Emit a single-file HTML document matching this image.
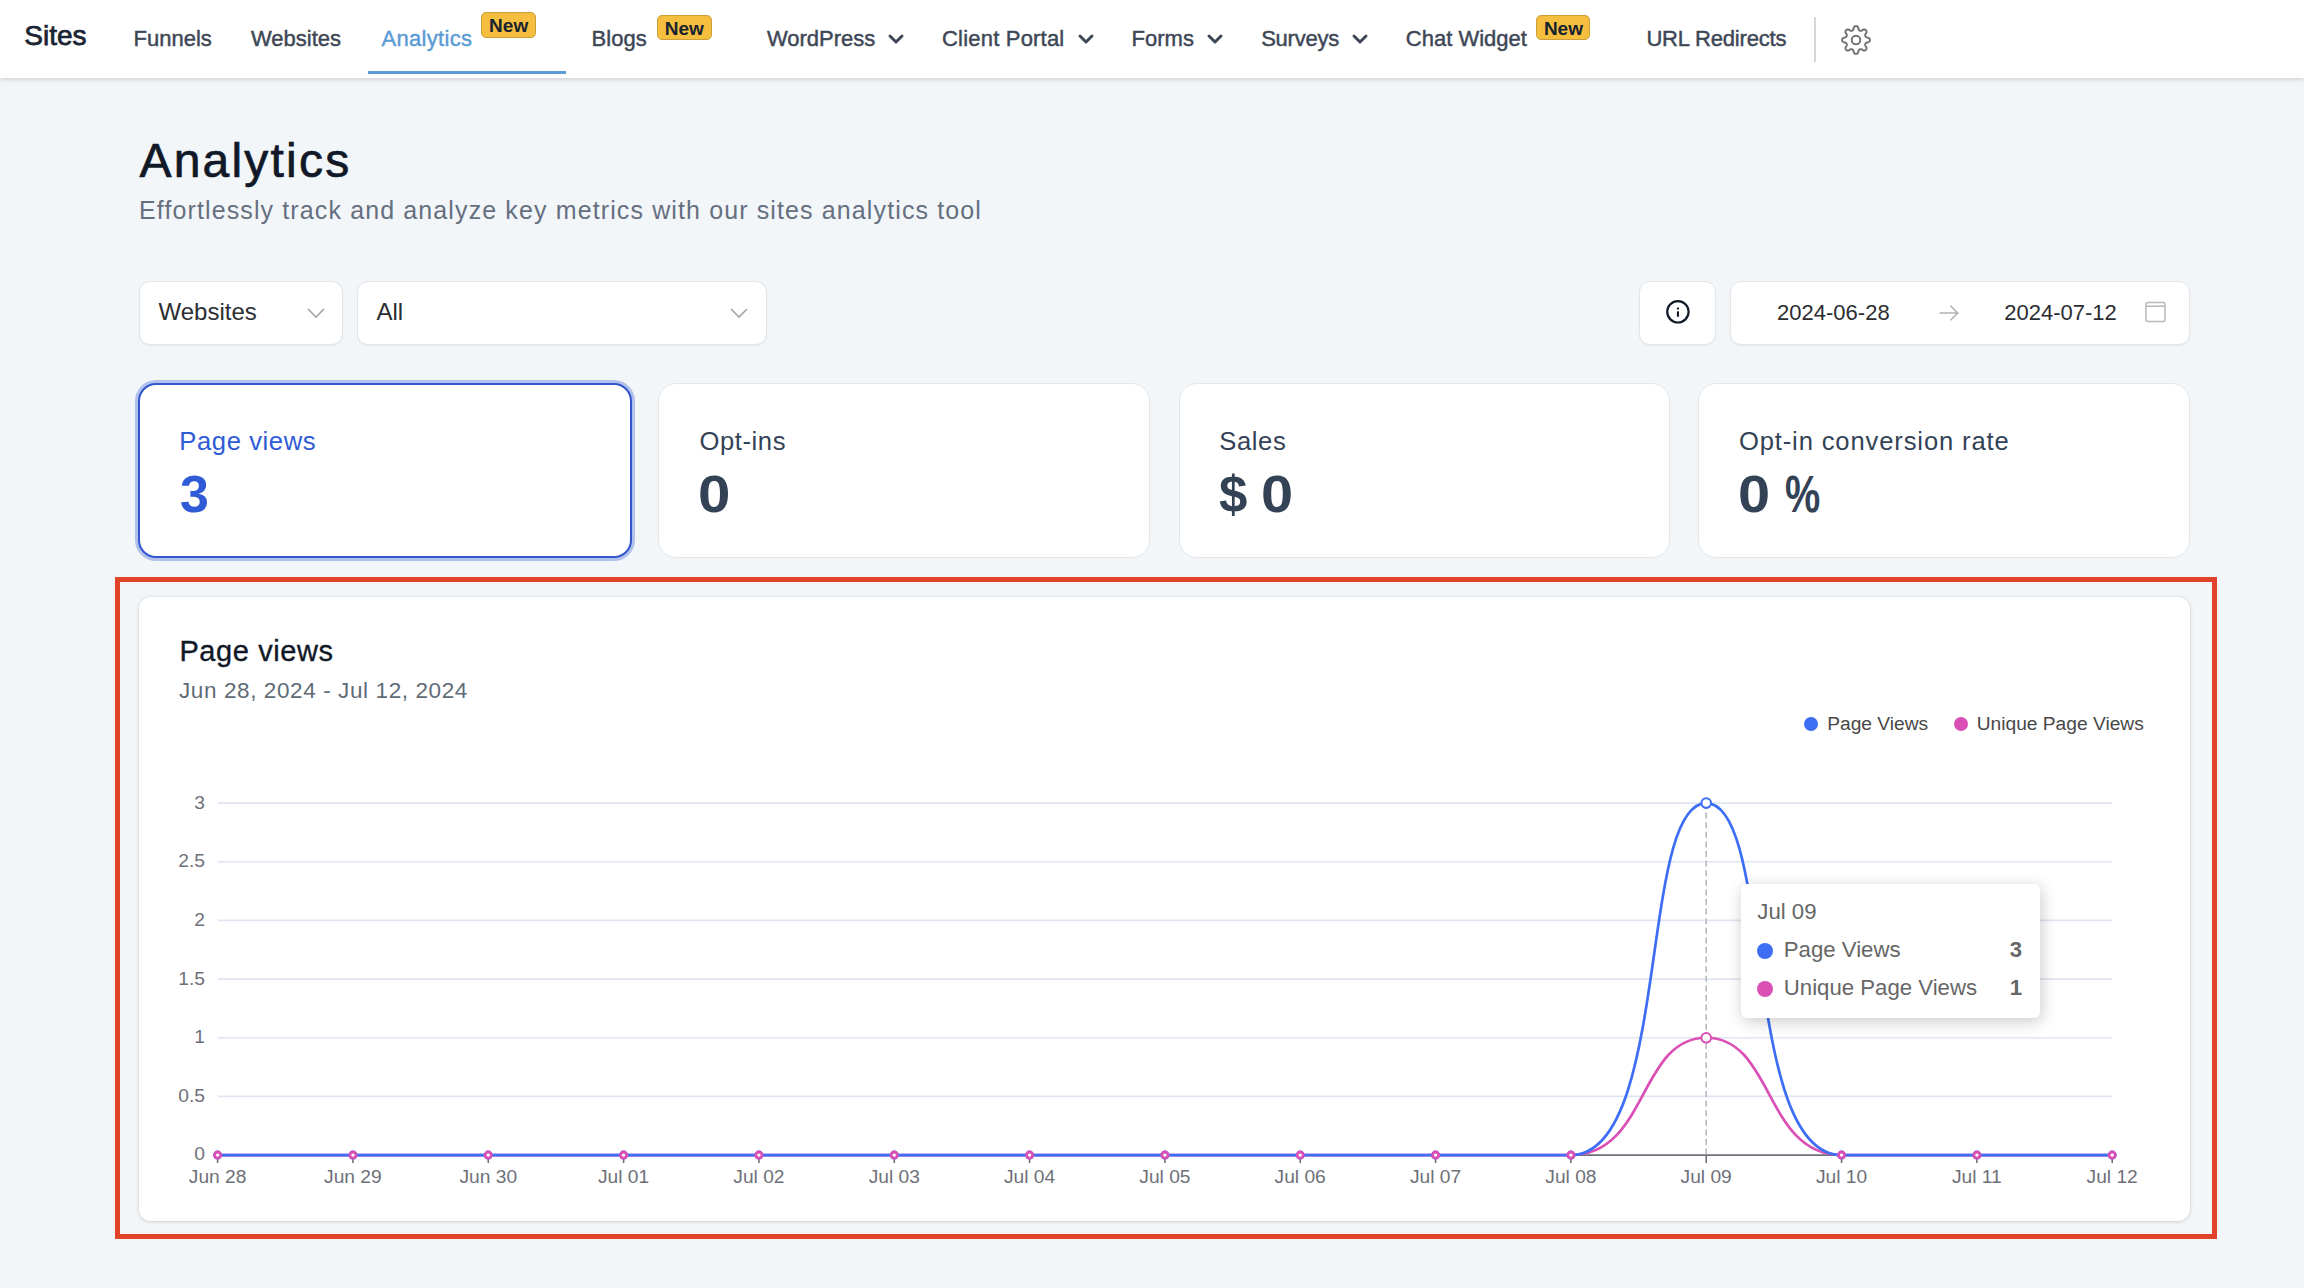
<!DOCTYPE html>
<html><head><meta charset="utf-8">
<style>
html,body{margin:0;padding:0;}
body{width:2304px;height:1288px;overflow:hidden;position:relative;background:#f2f6f9;font-family:"Liberation Sans",sans-serif;}
.t{position:absolute;white-space:nowrap;line-height:1;}
.abs{position:absolute;}
#nav{position:absolute;left:0;top:0;width:2304px;height:78px;background:#fff;box-shadow:0 1.5px 4px rgba(0,0,0,0.13);}
.ni{font-size:22px;color:#3e4756;top:27.7px;-webkit-text-stroke:0.45px #3e4756;}
.badge{position:absolute;background:#f5be3f;border:1px solid #c9a03a;border-radius:5px;box-sizing:border-box;}
.badge span{position:absolute;left:0;right:0;text-align:center;font-weight:bold;font-size:19px;line-height:1;color:#17232e;}
.chev{position:absolute;}
.box{position:absolute;background:#fff;border:1px solid #e2e5ea;box-sizing:border-box;box-shadow:0 1px 2px rgba(16,24,40,0.05);}
.card{position:absolute;top:383px;height:175px;background:#fff;border:1px solid #e3e6eb;border-radius:18px;box-sizing:border-box;}
.lbl{font-size:25.6px;color:#344256;top:429px;letter-spacing:0.6px;}
.val{font-size:52px;font-weight:bold;color:#344256;top:468.4px;transform-origin:0 0;}
.ax{font-size:19.2px;color:#6e7079;}
</style></head>
<body>
<div id="nav">
  <div class="t" style="left:24.3px;top:22.3px;font-size:28px;color:#1b2432;-webkit-text-stroke:0.75px #1b2432;">Sites</div>
  <div class="t ni" style="left:133.6px;">Funnels</div>
  <div class="t ni" style="left:251px;">Websites</div>
  <div class="t ni" style="left:381.5px;color:#5b9bd5;-webkit-text-stroke:0.45px #5b9bd5;letter-spacing:0.3px;">Analytics</div>
  <div class="badge" style="left:481.3px;top:12.3px;width:54.7px;height:25.5px;"><span style="top:3.2px;">New</span></div>
  <div class="abs" style="left:368px;top:71px;width:198px;height:3px;background:#5b9bd5;"></div>
  <div class="t ni" style="left:591.6px;">Blogs</div>
  <div class="badge" style="left:656.7px;top:14.5px;width:55.1px;height:25px;"><span style="top:3px;">New</span></div>
  <div class="t ni" style="left:766.9px;">WordPress</div>
  <svg class="chev" style="left:886px;top:31px;" width="20" height="16" viewBox="0 0 20 16"><path d="M4 5 L10 11 L16 5" fill="none" stroke="#3e4756" stroke-width="3" stroke-linecap="round" stroke-linejoin="round"/></svg>
  <div class="t ni" style="left:942px;letter-spacing:0.2px;">Client Portal</div>
  <svg class="chev" style="left:1076px;top:31px;" width="20" height="16" viewBox="0 0 20 16"><path d="M4 5 L10 11 L16 5" fill="none" stroke="#3e4756" stroke-width="3" stroke-linecap="round" stroke-linejoin="round"/></svg>
  <div class="t ni" style="left:1131.6px;">Forms</div>
  <svg class="chev" style="left:1205px;top:31px;" width="20" height="16" viewBox="0 0 20 16"><path d="M4 5 L10 11 L16 5" fill="none" stroke="#3e4756" stroke-width="3" stroke-linecap="round" stroke-linejoin="round"/></svg>
  <div class="t ni" style="left:1261.2px;letter-spacing:-0.25px;">Surveys</div>
  <svg class="chev" style="left:1350px;top:31px;" width="20" height="16" viewBox="0 0 20 16"><path d="M4 5 L10 11 L16 5" fill="none" stroke="#3e4756" stroke-width="3" stroke-linecap="round" stroke-linejoin="round"/></svg>
  <div class="t ni" style="left:1405.8px;">Chat Widget</div>
  <div class="badge" style="left:1536.4px;top:14.5px;width:54.1px;height:25px;"><span style="top:3px;">New</span></div>
  <div class="t ni" style="left:1646.4px;letter-spacing:-0.18px;">URL Redirects</div>
  <div class="abs" style="left:1813.5px;top:17px;width:2.2px;height:45px;background:#d3d6db;"></div>
  <svg class="abs" style="left:1840.4px;top:23.5px;" width="32" height="32" viewBox="0 0 32 32"><path fill="none" stroke="#6f6f6f" stroke-width="1.9" stroke-linejoin="round" d="M16.00 2.05L16.27 2.07L16.55 2.12L16.81 2.20L17.08 2.33L17.33 2.48L17.58 2.68L17.81 2.91L18.03 3.20L18.22 3.56L18.34 4.23L18.43 4.90L18.58 5.27L18.72 5.56L18.87 5.81L19.02 6.03L19.18 6.22L19.34 6.38L19.50 6.52L19.67 6.63L19.85 6.72L20.03 6.78L20.23 6.82L20.44 6.84L20.67 6.84L20.91 6.81L21.17 6.77L21.45 6.69L21.77 6.59L22.12 6.43L22.67 6.02L23.23 5.63L23.62 5.51L23.98 5.46L24.31 5.46L24.62 5.50L24.91 5.57L25.18 5.67L25.43 5.80L25.66 5.95L25.86 6.14L26.05 6.34L26.20 6.57L26.33 6.82L26.43 7.09L26.50 7.38L26.54 7.69L26.54 8.02L26.49 8.38L26.37 8.77L25.98 9.33L25.57 9.88L25.41 10.23L25.31 10.55L25.23 10.83L25.19 11.09L25.16 11.33L25.16 11.56L25.18 11.77L25.22 11.97L25.28 12.15L25.37 12.33L25.48 12.50L25.62 12.66L25.78 12.82L25.97 12.98L26.19 13.13L26.44 13.28L26.73 13.42L27.10 13.57L27.77 13.66L28.44 13.78L28.80 13.97L29.09 14.19L29.32 14.42L29.52 14.67L29.67 14.92L29.80 15.19L29.88 15.45L29.93 15.73L29.95 16.00L29.93 16.27L29.88 16.55L29.80 16.81L29.67 17.08L29.52 17.33L29.32 17.58L29.09 17.81L28.80 18.03L28.44 18.22L27.77 18.34L27.10 18.43L26.73 18.58L26.44 18.72L26.19 18.87L25.97 19.02L25.78 19.18L25.62 19.34L25.48 19.50L25.37 19.67L25.28 19.85L25.22 20.03L25.18 20.23L25.16 20.44L25.16 20.67L25.19 20.91L25.23 21.17L25.31 21.45L25.41 21.77L25.57 22.12L25.98 22.67L26.37 23.23L26.49 23.62L26.54 23.98L26.54 24.31L26.50 24.62L26.43 24.91L26.33 25.18L26.20 25.43L26.05 25.66L25.86 25.86L25.66 26.05L25.43 26.20L25.18 26.33L24.91 26.43L24.62 26.50L24.31 26.54L23.98 26.54L23.62 26.49L23.23 26.37L22.67 25.98L22.12 25.57L21.77 25.41L21.45 25.31L21.17 25.23L20.91 25.19L20.67 25.16L20.44 25.16L20.23 25.18L20.03 25.22L19.85 25.28L19.67 25.37L19.50 25.48L19.34 25.62L19.18 25.78L19.02 25.97L18.87 26.19L18.72 26.44L18.58 26.73L18.43 27.10L18.34 27.77L18.22 28.44L18.03 28.80L17.81 29.09L17.58 29.32L17.33 29.52L17.08 29.67L16.81 29.80L16.55 29.88L16.27 29.93L16.00 29.95L15.73 29.93L15.45 29.88L15.19 29.80L14.92 29.67L14.67 29.52L14.42 29.32L14.19 29.09L13.97 28.80L13.78 28.44L13.66 27.77L13.57 27.10L13.42 26.73L13.28 26.44L13.13 26.19L12.98 25.97L12.82 25.78L12.66 25.62L12.50 25.48L12.33 25.37L12.15 25.28L11.97 25.22L11.77 25.18L11.56 25.16L11.33 25.16L11.09 25.19L10.83 25.23L10.55 25.31L10.23 25.41L9.88 25.57L9.33 25.98L8.77 26.37L8.38 26.49L8.02 26.54L7.69 26.54L7.38 26.50L7.09 26.43L6.82 26.33L6.57 26.20L6.34 26.05L6.14 25.86L5.95 25.66L5.80 25.43L5.67 25.18L5.57 24.91L5.50 24.62L5.46 24.31L5.46 23.98L5.51 23.62L5.63 23.23L6.02 22.67L6.43 22.12L6.59 21.77L6.69 21.45L6.77 21.17L6.81 20.91L6.84 20.67L6.84 20.44L6.82 20.23L6.78 20.03L6.72 19.85L6.63 19.67L6.52 19.50L6.38 19.34L6.22 19.18L6.03 19.02L5.81 18.87L5.56 18.72L5.27 18.58L4.90 18.43L4.23 18.34L3.56 18.22L3.20 18.03L2.91 17.81L2.68 17.58L2.48 17.33L2.33 17.08L2.20 16.81L2.12 16.55L2.07 16.27L2.05 16.00L2.07 15.73L2.12 15.45L2.20 15.19L2.33 14.92L2.48 14.67L2.68 14.42L2.91 14.19L3.20 13.97L3.56 13.78L4.23 13.66L4.90 13.57L5.27 13.42L5.56 13.28L5.81 13.13L6.03 12.98L6.22 12.82L6.38 12.66L6.52 12.50L6.63 12.33L6.72 12.15L6.78 11.97L6.82 11.77L6.84 11.56L6.84 11.33L6.81 11.09L6.77 10.83L6.69 10.55L6.59 10.23L6.43 9.88L6.02 9.33L5.63 8.77L5.51 8.38L5.46 8.02L5.46 7.69L5.50 7.38L5.57 7.09L5.67 6.82L5.80 6.57L5.95 6.34L6.14 6.14L6.34 5.95L6.57 5.80L6.82 5.67L7.09 5.57L7.38 5.50L7.69 5.46L8.02 5.46L8.38 5.51L8.77 5.63L9.33 6.02L9.88 6.43L10.23 6.59L10.55 6.69L10.83 6.77L11.09 6.81L11.33 6.84L11.56 6.84L11.77 6.82L11.97 6.78L12.15 6.72L12.33 6.63L12.50 6.52L12.66 6.38L12.82 6.22L12.98 6.03L13.13 5.81L13.28 5.56L13.42 5.27L13.57 4.90L13.66 4.23L13.78 3.56L13.97 3.20L14.19 2.91L14.42 2.68L14.67 2.48L14.92 2.33L15.19 2.20L15.45 2.12L15.73 2.07Z"/><circle cx="16" cy="16" r="4.3" fill="none" stroke="#6f6f6f" stroke-width="1.9"/></svg>
</div>

<!-- header -->
<div class="t" style="left:139.5px;top:136.7px;font-size:48px;color:#111827;letter-spacing:2.2px;-webkit-text-stroke:0.7px #111827;">Analytics</div>
<div class="t" style="left:139px;top:197.8px;font-size:25px;color:#666f80;letter-spacing:1.12px;">Effortlessly track and analyze key metrics with our sites analytics tool</div>

<!-- filters -->
<div class="box" style="left:139px;top:281px;width:204px;height:63.5px;border-radius:11px;"></div>
<div class="t" style="left:158.5px;top:300.4px;font-size:24px;color:#2b2d31;">Websites</div>
<svg class="abs" style="left:306px;top:306px;" width="20" height="14" viewBox="0 0 20 14"><path d="M2 3 L10 11 L18 3" fill="none" stroke="#a3a3a3" stroke-width="1.6"/></svg>
<div class="box" style="left:356.7px;top:281px;width:410px;height:63.5px;border-radius:11px;"></div>
<div class="t" style="left:376.5px;top:300.4px;font-size:24px;color:#2b2d31;">All</div>
<svg class="abs" style="left:729px;top:306px;" width="20" height="14" viewBox="0 0 20 14"><path d="M2 3 L10 11 L18 3" fill="none" stroke="#a3a3a3" stroke-width="1.6"/></svg>

<div class="box" style="left:1639.4px;top:281px;width:77px;height:63.5px;border-radius:11px;"></div>
<svg class="abs" style="left:1664px;top:298px;" width="28" height="28" viewBox="0 0 28 28"><circle cx="13.9" cy="13.8" r="10.7" fill="none" stroke="#111827" stroke-width="2.2"/><rect x="12.9" y="13.3" width="2.1" height="5.5" rx="0.6" fill="#111827"/><rect x="12.9" y="9.4" width="2.1" height="2.1" rx="0.5" fill="#111827"/></svg>
<div class="box" style="left:1729.6px;top:281px;width:460.5px;height:63.5px;border-radius:11px;"></div>
<div class="t" style="left:1777.1px;top:301.8px;font-size:22px;color:#2b2d31;">2024-06-28</div>
<svg class="abs" style="left:1936px;top:301.5px;" width="26" height="22" viewBox="0 0 26 22"><path d="M3.5 11 H21.5 M14.5 3.8 L21.7 11 L14.5 18.2" fill="none" stroke="#b3b3b3" stroke-width="1.6"/></svg>
<div class="t" style="left:2004.2px;top:301.8px;font-size:22px;color:#2b2d31;">2024-07-12</div>
<svg class="abs" style="left:2143px;top:300px;" width="25" height="25" viewBox="0 0 25 25"><rect x="3" y="2.5" width="19" height="19" rx="2" fill="none" stroke="#b8b8b8" stroke-width="1.5"/><path d="M3 6.2 H22" stroke="#b8b8b8" stroke-width="1.5"/></svg>

<!-- cards -->
<div class="card" style="left:138px;width:494px;border:2px solid #3356cc;box-shadow:0 0 0 3px rgba(58,95,209,0.35);"></div>
<div class="t lbl" style="left:179.3px;color:#2f5bd6;">Page views</div>
<div class="t val" style="left:179.9px;color:#2f5bd6;">3</div>

<div class="card" style="left:658px;width:492px;"></div>
<div class="t lbl" style="left:699.4px;">Opt-ins</div>
<div class="t val" style="left:697.7px;transform:scaleX(1.12);">0</div>

<div class="card" style="left:1179px;width:491px;"></div>
<div class="t lbl" style="left:1219.3px;">Sales</div>
<div class="t val" style="left:1219px;transform:scaleX(0.98);">$</div><div class="t val" style="left:1261.2px;transform:scaleX(1.11);">0</div>

<div class="card" style="left:1698px;width:492px;"></div>
<div class="t lbl" style="left:1738.9px;letter-spacing:0.86px;">Opt-in conversion rate</div>
<div class="t val" style="left:1738px;transform:scaleX(1.11);">0</div><div class="t val" style="left:1784.6px;transform:scaleX(0.763);">%</div>

<!-- red frame -->
<div class="abs" style="left:115.2px;top:576.6px;width:2101.8px;height:662.7px;border:5px solid #e0432a;box-sizing:border-box;"></div>

<!-- chart card -->
<div class="abs" style="left:139px;top:597px;width:2051.3px;height:624.3px;background:#fff;border-radius:12px;box-shadow:0 0 0 1px rgba(0,0,0,0.035),0 1px 4px rgba(0,0,0,0.12);"></div>
<div class="t" style="left:179.4px;top:636.7px;font-size:29px;color:#111827;letter-spacing:0.6px;-webkit-text-stroke:0.35px #111827;">Page views</div>
<div class="t" style="left:179px;top:679.5px;font-size:22.5px;color:#5f6b76;letter-spacing:0.6px;">Jun 28, 2024 - Jul 12, 2024</div>

<svg class="abs" style="left:0;top:0;" width="2304" height="1288" viewBox="0 0 2304 1288">
  <g stroke="#e0e6f1" stroke-width="1.6">
    <line x1="217.6" y1="803.1" x2="2112.2" y2="803.1"/>
    <line x1="217.6" y1="861.8" x2="2112.2" y2="861.8"/>
    <line x1="217.6" y1="920.4" x2="2112.2" y2="920.4"/>
    <line x1="217.6" y1="979.1" x2="2112.2" y2="979.1"/>
    <line x1="217.6" y1="1037.8" x2="2112.2" y2="1037.8"/>
    <line x1="217.6" y1="1096.4" x2="2112.2" y2="1096.4"/>
  </g>
  <line x1="217.6" y1="1155.1" x2="2112.2" y2="1155.1" stroke="#6e7079" stroke-width="1.6"/>
  <g stroke="#6e7079" stroke-width="1.6">
<line x1="217.60" y1="1155.1" x2="217.60" y2="1163"/>
<line x1="352.93" y1="1155.1" x2="352.93" y2="1163"/>
<line x1="488.26" y1="1155.1" x2="488.26" y2="1163"/>
<line x1="623.59" y1="1155.1" x2="623.59" y2="1163"/>
<line x1="758.92" y1="1155.1" x2="758.92" y2="1163"/>
<line x1="894.25" y1="1155.1" x2="894.25" y2="1163"/>
<line x1="1029.58" y1="1155.1" x2="1029.58" y2="1163"/>
<line x1="1164.91" y1="1155.1" x2="1164.91" y2="1163"/>
<line x1="1300.24" y1="1155.1" x2="1300.24" y2="1163"/>
<line x1="1435.57" y1="1155.1" x2="1435.57" y2="1163"/>
<line x1="1570.90" y1="1155.1" x2="1570.90" y2="1163"/>
<line x1="1706.23" y1="1155.1" x2="1706.23" y2="1163"/>
<line x1="1841.56" y1="1155.1" x2="1841.56" y2="1163"/>
<line x1="1976.89" y1="1155.1" x2="1976.89" y2="1163"/>
<line x1="2112.22" y1="1155.1" x2="2112.22" y2="1163"/>
</g>
  <line x1="1706.2" y1="803" x2="1706.2" y2="1155" stroke="#b6b9c2" stroke-width="1.6" stroke-dasharray="6 3.6"/>
  <path fill="none" stroke="#db50b5" stroke-width="2.7" d="M217.6 1155.1H1570.9C1647.99 1155.1 1638.57 1037.77 1706.23 1037.77C1773.89 1037.77 1764.47 1155.1 1841.56 1155.1H2112.2"/>
  <path fill="none" stroke="#3e6ef3" stroke-width="2.7" d="M217.6 1155.1H1570.9C1670.49 1155.1 1638.57 803.11 1706.23 803.11C1773.89 803.11 1741.97 1155.1 1841.56 1155.1H2112.2"/>
<g fill="#fff" stroke-width="2.8">
<circle cx="217.60" cy="1155.1" r="3.1" stroke="#3e6ef3"/>
<circle cx="352.93" cy="1155.1" r="3.1" stroke="#3e6ef3"/>
<circle cx="488.26" cy="1155.1" r="3.1" stroke="#3e6ef3"/>
<circle cx="623.59" cy="1155.1" r="3.1" stroke="#3e6ef3"/>
<circle cx="758.92" cy="1155.1" r="3.1" stroke="#3e6ef3"/>
<circle cx="894.25" cy="1155.1" r="3.1" stroke="#3e6ef3"/>
<circle cx="1029.58" cy="1155.1" r="3.1" stroke="#3e6ef3"/>
<circle cx="1164.91" cy="1155.1" r="3.1" stroke="#3e6ef3"/>
<circle cx="1300.24" cy="1155.1" r="3.1" stroke="#3e6ef3"/>
<circle cx="1435.57" cy="1155.1" r="3.1" stroke="#3e6ef3"/>
<circle cx="1570.90" cy="1155.1" r="3.1" stroke="#3e6ef3"/>
<circle cx="1841.56" cy="1155.1" r="3.1" stroke="#3e6ef3"/>
<circle cx="1976.89" cy="1155.1" r="3.1" stroke="#3e6ef3"/>
<circle cx="2112.22" cy="1155.1" r="3.1" stroke="#3e6ef3"/>
<circle cx="217.60" cy="1155.1" r="3.1" stroke="#db50b5"/>
<circle cx="352.93" cy="1155.1" r="3.1" stroke="#db50b5"/>
<circle cx="488.26" cy="1155.1" r="3.1" stroke="#db50b5"/>
<circle cx="623.59" cy="1155.1" r="3.1" stroke="#db50b5"/>
<circle cx="758.92" cy="1155.1" r="3.1" stroke="#db50b5"/>
<circle cx="894.25" cy="1155.1" r="3.1" stroke="#db50b5"/>
<circle cx="1029.58" cy="1155.1" r="3.1" stroke="#db50b5"/>
<circle cx="1164.91" cy="1155.1" r="3.1" stroke="#db50b5"/>
<circle cx="1300.24" cy="1155.1" r="3.1" stroke="#db50b5"/>
<circle cx="1435.57" cy="1155.1" r="3.1" stroke="#db50b5"/>
<circle cx="1570.90" cy="1155.1" r="3.1" stroke="#db50b5"/>
<circle cx="1841.56" cy="1155.1" r="3.1" stroke="#db50b5"/>
<circle cx="1976.89" cy="1155.1" r="3.1" stroke="#db50b5"/>
<circle cx="2112.22" cy="1155.1" r="3.1" stroke="#db50b5"/>
</g>
<circle cx="1706.23" cy="803.11" r="4.8" fill="#fff" stroke="#3e6ef3" stroke-width="2.1"/>
<circle cx="1706.23" cy="1037.77" r="4.8" fill="#fff" stroke="#db50b5" stroke-width="2.1"/>
</svg>
<div class="t ax" style="left:217.6px;top:1166.8px;width:120px;margin-left:-60px;text-align:center;">Jun 28</div>
<div class="t ax" style="left:352.9px;top:1166.8px;width:120px;margin-left:-60px;text-align:center;">Jun 29</div>
<div class="t ax" style="left:488.3px;top:1166.8px;width:120px;margin-left:-60px;text-align:center;">Jun 30</div>
<div class="t ax" style="left:623.6px;top:1166.8px;width:120px;margin-left:-60px;text-align:center;">Jul 01</div>
<div class="t ax" style="left:758.9px;top:1166.8px;width:120px;margin-left:-60px;text-align:center;">Jul 02</div>
<div class="t ax" style="left:894.3px;top:1166.8px;width:120px;margin-left:-60px;text-align:center;">Jul 03</div>
<div class="t ax" style="left:1029.6px;top:1166.8px;width:120px;margin-left:-60px;text-align:center;">Jul 04</div>
<div class="t ax" style="left:1164.9px;top:1166.8px;width:120px;margin-left:-60px;text-align:center;">Jul 05</div>
<div class="t ax" style="left:1300.2px;top:1166.8px;width:120px;margin-left:-60px;text-align:center;">Jul 06</div>
<div class="t ax" style="left:1435.6px;top:1166.8px;width:120px;margin-left:-60px;text-align:center;">Jul 07</div>
<div class="t ax" style="left:1570.9px;top:1166.8px;width:120px;margin-left:-60px;text-align:center;">Jul 08</div>
<div class="t ax" style="left:1706.2px;top:1166.8px;width:120px;margin-left:-60px;text-align:center;">Jul 09</div>
<div class="t ax" style="left:1841.6px;top:1166.8px;width:120px;margin-left:-60px;text-align:center;">Jul 10</div>
<div class="t ax" style="left:1976.9px;top:1166.8px;width:120px;margin-left:-60px;text-align:center;">Jul 11</div>
<div class="t ax" style="left:2112.2px;top:1166.8px;width:120px;margin-left:-60px;text-align:center;">Jul 12</div>
<div class="t ax" style="left:105px;width:100px;text-align:right;top:1144.4px;">0</div>
<div class="t ax" style="left:105px;width:100px;text-align:right;top:1085.8px;">0.5</div>
<div class="t ax" style="left:105px;width:100px;text-align:right;top:1027.1px;">1</div>
<div class="t ax" style="left:105px;width:100px;text-align:right;top:968.5px;">1.5</div>
<div class="t ax" style="left:105px;width:100px;text-align:right;top:909.8px;">2</div>
<div class="t ax" style="left:105px;width:100px;text-align:right;top:851.1px;">2.5</div>
<div class="t ax" style="left:105px;width:100px;text-align:right;top:792.5px;">3</div>

<!-- legend -->
<div class="abs" style="left:1804.4px;top:716.5px;width:14px;height:14px;border-radius:50%;background:#3e6ef3;"></div>
<div class="t" style="left:1827.2px;top:714.1px;font-size:19.2px;color:#484848;">Page Views</div>
<div class="abs" style="left:1953.5px;top:716.5px;width:14px;height:14px;border-radius:50%;background:#db50b5;"></div>
<div class="t" style="left:1976.7px;top:714.1px;font-size:19.2px;color:#484848;">Unique Page Views</div>
<!-- tooltip -->
<div class="abs" style="left:1740.5px;top:884.2px;width:299px;height:133.4px;background:#fff;border-radius:6px;box-shadow:1.6px 3.2px 16px rgba(0,0,0,0.2);"></div>
<div class="t" style="left:1757.3px;top:900.7px;font-size:22.2px;color:#666;">Jul 09</div>
<div class="abs" style="left:1757.1px;top:942.5px;width:16px;height:16px;border-radius:50%;background:#3e6ef3;"></div>
<div class="t" style="left:1783.8px;top:939.3px;font-size:22.2px;color:#666;">Page Views</div>
<div class="t" style="left:1922px;width:100px;text-align:right;top:939.3px;font-size:22.2px;color:#666;font-weight:bold;">3</div>
<div class="abs" style="left:1757.1px;top:980.5px;width:16px;height:16px;border-radius:50%;background:#db50b5;"></div>
<div class="t" style="left:1783.8px;top:977.3px;font-size:22.2px;color:#666;">Unique Page Views</div>
<div class="t" style="left:1922px;width:100px;text-align:right;top:977.3px;font-size:22.2px;color:#666;font-weight:bold;">1</div>
</body></html>
